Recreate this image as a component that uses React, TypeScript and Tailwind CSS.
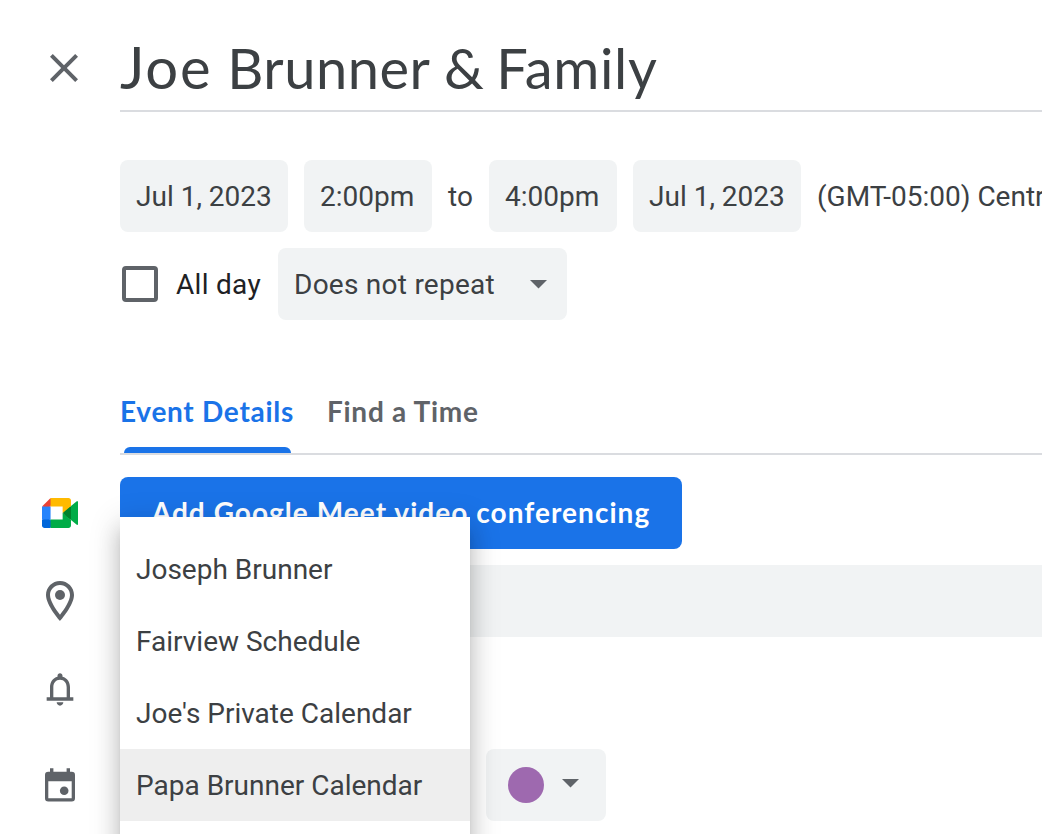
import type { ReactNode } from "react";

const heading = "font-['Lato',sans-serif]";
const calendars = ["Joseph Brunner", "Fairview Schedule", "Joe's Private Calendar", "Papa Brunner Calendar"];

function Chip({ children, className }: { children: ReactNode; className: string }) {
  return (
    <button className={`flex h-[72px] shrink-0 items-center rounded-lg bg-[#f1f3f4] pl-4 whitespace-nowrap ${className}`}>
      {children}
    </button>
  );
}

function Arrow() {
  return (
    <svg width="17" height="9" viewBox="0 0 17 9" fill="#5f6368">
      <path d="M0 0h17L8.5 8.5z" />
    </svg>
  );
}

function CloseIcon() {
  return (
    <svg width="48" height="48" viewBox="0 0 24 24" fill="#5f6368">
      <path d="M19 6.41L17.59 5 12 10.59 6.41 5 5 6.41 10.59 12 5 17.59 6.41 19 12 13.41 17.59 19 19 17.59 13.41 12z" />
    </svg>
  );
}

function MeetIcon() {
  return (
    <svg width="36.5" height="30" viewBox="0 0 87.5 72">
      <path fill="#00832d" d="M49.5 36l8.53 9.75 11.47 7.33 2-17.02-2-16.64-11.69 6.44z" />
      <path fill="#0066da" d="M0 51.5V66c0 3.315 2.685 6 6 6h14.5l3-10.96-3-9.54-9.95-3z" />
      <path fill="#e94235" d="M20.5 0L0 20.5l10.55 3 9.95-3 2.95-9.41z" />
      <path fill="#2684fc" d="M20.5 20.5H0v31h20.5z" />
      <path fill="#00ac47" d="M82.6 8.68L69.5 19.42v33.66l13.16 10.79c1.97 1.54 4.85.135 4.85-2.37V11c0-2.535-2.945-3.925-4.91-2.32zM49.5 36v15.5h-29V72h43c3.315 0 6-2.685 6-6V53.08z" />
      <path fill="#ffba00" d="M63.5 0h-43v20.5h29V36l20-16.57V6c0-3.315-2.685-6-6-6z" />
    </svg>
  );
}

function PlaceIcon() {
  return (
    <svg width="48" height="48" viewBox="0 0 24 24" fill="#5f6368">
      <path d="M12 2C8.13 2 5 5.13 5 9c0 5.25 7 13 7 13s7-7.75 7-13c0-3.87-3.13-7-7-7zM7 9c0-2.76 2.24-5 5-5s5 2.24 5 5c0 2.88-2.88 7.19-5 9.88C9.92 16.21 7 11.85 7 9z" />
      <circle cx="12" cy="9" r="2.5" />
    </svg>
  );
}

function BellIcon() {
  return (
    <svg width="40" height="40" viewBox="0 0 24 24" fill="#5f6368">
      <path d="M18 17v-6c0-3.07-1.63-5.64-4.5-6.32V4c0-.83-.67-1.5-1.5-1.5s-1.5.67-1.5 1.5v.68C7.64 5.36 6 7.92 6 11v6H4v2h16v-2h-2zm-2 0H8v-6c0-2.48 1.51-4.5 4-4.5s4 2.02 4 4.5v6zm-4 5c1.1 0 2-.9 2-2h-4c0 1.1.9 2 2 2z" />
    </svg>
  );
}

function CalendarIcon() {
  return (
    <svg width="40" height="40" viewBox="0 0 40 40" fill="#5f6368">
      <path
        fillRule="evenodd"
        d="M10 3.3h3.4v3.4h13.2V3.3H30v3.4h1.7a3.3 3.3 0 0 1 3.3 3.3v23.3a3.3 3.3 0 0 1-3.3 3.3H8.3A3.3 3.3 0 0 1 5 33.3V10a3.3 3.3 0 0 1 3.3-3.3H10zM8.3 16.3v17h23.4v-17z"
      />
      <circle cx="24.2" cy="25.8" r="4.3" />
    </svg>
  );
}

export default function App() {
  return (
    <div className="flex h-[834px] w-[1042px] flex-col overflow-hidden bg-white font-['Roboto',sans-serif] text-[28px] leading-[40px] text-[#3c4043]">
      <header className="flex h-[112px] shrink-0">
        <button aria-label="Close" className="w-[120px] pt-6 pl-10">
          <CloseIcon />
        </button>
        <h1 className={`flex-1 border-b-2 border-[#dadce0] pt-[31px] text-[56px] leading-[72px] whitespace-nowrap ${heading}`}>
          <span className="text-[58px] tracking-[1.8px]">Joe</span>
          <span className="tracking-[0.5px]"> Brunner </span>
          <span className="tracking-[-1px]">&amp; </span>
          <span className="tracking-[0.7px]">Family</span>
        </h1>
      </header>

      <section className="mt-12 ml-[120px] flex shrink-0 flex-col gap-4">
        <div className="flex items-center whitespace-nowrap">
          <Chip className="w-[168px]"><span className="pt-0.5">Jul 1, 2023</span></Chip>
          <Chip className="ml-4 w-[128px]"><span className="pt-0.5">2:00pm</span></Chip>
          <span className="w-[57px] shrink-0 pt-0.5 text-center">to</span>
          <Chip className="w-[128px]"><span className="pt-0.5">4:00pm</span></Chip>
          <Chip className="ml-4 w-[168px]"><span className="pt-0.5">Jul 1, 2023</span></Chip>
          <span className="ml-4 pt-0.5">(GMT-05:00) Centr</span>
        </div>
        <div className="flex items-center tracking-[0.3px]">
          <span className="ml-0.5 size-9 rounded-[4px] border-4 border-[#5f6368]" />
          <span className="ml-[18px] w-[102px] pt-0.5 text-[#202124]">All day</span>
          <Chip className="w-[289px] justify-between pr-5 tracking-[0.25px]">
            <span className="pt-0.5">Does not repeat</span>
            <Arrow />
          </Chip>
        </div>
      </section>

      <nav className={`mt-[71px] ml-[120px] flex h-16 shrink-0 gap-[33px] border-b-2 border-[#dadce0] font-bold tracking-[0.72px] ${heading}`}>
        <div className="flex w-[174px] flex-col justify-between whitespace-nowrap text-[#1a73e8]">
          Event Details
          <span className="ml-1 h-1.5 w-[167px] rounded-t-md bg-[#1a73e8]" />
        </div>
        <div className="whitespace-nowrap text-[#5f6368]">Find a Time</div>
      </nav>

      <main className="flex flex-1">
        <aside className="flex w-[120px] shrink-0 flex-col items-center">
          <div className="mt-[43px] flex h-[30px]"><MeetIcon /></div>
          <div className="mt-[49px] h-12"><PlaceIcon /></div>
          <div className="mt-11 h-10"><BellIcon /></div>
          <div className="mt-14 h-10"><CalendarIcon /></div>
        </aside>
        <div className="relative flex-1 pt-[22px]">
          <button className={`block h-[72px] w-[562px] rounded-lg bg-[#1a73e8] pb-0.5 text-center font-bold tracking-[1.05px] whitespace-nowrap text-white ${heading}`}>
            Add Google Meet video conferencing
          </button>
          <div className="mt-4 h-[72px] bg-[#f1f3f4]" />
          <Chip className="mt-28 ml-[366px] w-[120px] pl-[22px]">
            <span className="mr-[18px] size-9 rounded-full bg-[#9e69af]" />
            <span className="-mt-1"><Arrow /></span>
          </Chip>
          <ul className="absolute top-[62px] left-0 h-[420px] w-[350px] bg-white pt-4 shadow-[0_16px_20px_2px_rgba(0,0,0,0.14),0_6px_28px_4px_rgba(0,0,0,0.12),0_10px_10px_-6px_rgba(0,0,0,0.2)]">
            {calendars.map((name, i) => (
              <li key={name} className={`flex h-[72px] items-center pt-0.5 pl-4 whitespace-nowrap ${i === 3 ? "bg-[#eeeeee]" : ""}`}>
                {name}
              </li>
            ))}
          </ul>
        </div>
      </main>
    </div>
  );
}
